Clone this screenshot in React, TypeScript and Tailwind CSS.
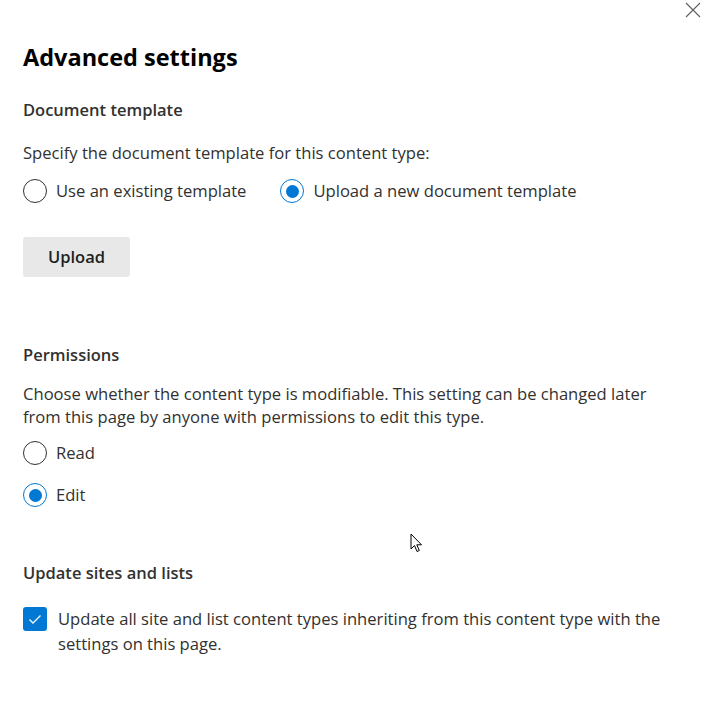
import React from "react";

function Radio({ checked, label }: { checked?: boolean; label: string }) {
  return (
    <div className="flex items-center gap-[9px]">
      {checked ? (
        <span className="flex h-[24px] w-[24px] items-center justify-center rounded-full border border-[#0078d4] bg-white">
          <span className="h-[13px] w-[13px] rounded-full bg-[#0078d4]" />
        </span>
      ) : (
        <span className="h-[24px] w-[24px] rounded-full border border-[#323130] bg-white" />
      )}
      <span className="text-[16.6px] leading-[24px] text-[#323130]">{label}</span>
    </div>
  );
}

export default function App() {
  return (
    <div
      className="relative h-[707px] w-[708px] overflow-hidden bg-white px-[23px] text-[#323130]"
      style={{ fontFamily: '"Open Sans", "Noto Sans", sans-serif' }}
    >
      <button className="absolute right-[7px] top-[2px] flex h-[16px] w-[16px] items-center justify-center text-[#605e5c]">
        <svg width="16" height="16" viewBox="0 0 16 16" fill="none" stroke="currentColor" strokeWidth="1.1">
          <path d="M1 1L15 15M15 1L1 15" />
        </svg>
      </button>

      <h1 className="pt-[41px] text-[23.5px] font-bold leading-[32px] text-black">Advanced settings</h1>

      <h2 className="mt-[25px] text-[16.5px] font-semibold leading-[24px]">Document template</h2>
      <p className="mt-[19px] text-[16.6px] leading-[24px]">Specify the document template for this content type:</p>
      <div className="mt-[14px] flex items-center gap-[34px]">
        <Radio label="Use an existing template" />
        <Radio checked label="Upload a new document template" />
      </div>
      <button className="mt-[34px] flex h-[40px] w-[107px] items-center justify-center rounded-[3px] bg-[#e8e8e8] text-[16.5px] font-semibold text-[#201f1e]">
        Upload
      </button>

      <h2 className="mt-[66px] text-[16.5px] font-semibold leading-[24px]">Permissions</h2>
      <p className="mt-[15px] w-[650px] text-[16.6px] leading-[23px]">
        Choose whether the content type is modifiable. This setting can be changed later from this page by anyone with permissions to edit this type.
      </p>
      <div className="mt-[13px] flex flex-col gap-[18px]">
        <Radio label="Read" />
        <Radio checked label="Edit" />
      </div>

      <h2 className="mt-[54px] text-[16.5px] font-semibold leading-[24px]">Update sites and lists</h2>
      <div className="mt-[21px] flex items-start gap-[11px]">
        <span className="mt-[1px] flex h-[24px] w-[24px] shrink-0 items-center justify-center rounded-[3px] bg-[#0078d4]">
          <svg width="16" height="16" viewBox="0 0 16 16" fill="none" stroke="white" strokeWidth="1.3">
            <path d="M2.5 8.5L6 12L13.5 4.5" />
          </svg>
        </span>
        <p className="w-[620px] text-[16.6px] leading-[25px]">
          Update all site and list content types inheriting from this content type with the settings on this page.
        </p>
      </div>

      <svg className="absolute left-[410px] top-[533px]" width="14" height="21" viewBox="0 0 14 21">
        <path d="M1 1L1 16L4.5 12.5L7 18.5L9.3 17.5L6.8 11.8L11.5 11.8Z" fill="white" stroke="black" strokeWidth="1" strokeLinejoin="round" />
      </svg>
    </div>
  );
}
